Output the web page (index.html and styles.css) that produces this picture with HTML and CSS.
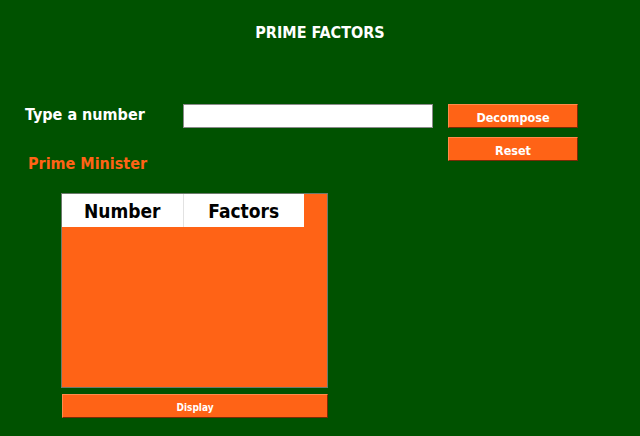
FILE: index.html
```html
<!DOCTYPE html>
<html>
<head>
<meta charset="utf-8">
<link rel="stylesheet" href="styles.css">
</head>
<body>
<h1 class="title">PRIME FACTORS</h1>
<div class="top">
  <div class="left">
    <div class="entry">
      <label class="label">Type a number</label>
      <input class="field" type="text">
    </div>
    <div class="pm">Prime Minister</div>
  </div>
  <div class="actions">
    <button class="btn">Decompose</button>
    <button class="btn">Reset</button>
  </div>
</div>
<div class="panel">
  <div class="thead">
    <div class="th">Number</div>
    <div class="th">Factors</div>
  </div>
</div>
<button class="btn display">Display</button>
</body>
</html>
```
FILE: styles.css
```css
html, body {
  margin: 0;
  padding: 0;
  background: #005200;
  width: 640px;
  height: 436px;
  overflow: hidden;
  font-family: "DejaVu Sans Condensed", "DejaVu Sans", sans-serif;
  font-weight: bold;
}
.title {
  margin: 0;
  padding-top: 23px;
  height: 20px;
  line-height: 20px;
  font-size: 16px;
  text-align: center;
  color: #fff;
}
.top {
  display: flex;
  margin-top: 61px;
  padding-left: 25px;
}
.left {
  display: flex;
  flex-direction: column;
}
.entry {
  display: flex;
  align-items: center;
  height: 24px;
}
.label {
  width: 158px;
  color: #fff;
  font-size: 16px;
  line-height: 20px;
  margin-top: -3px;
}
.field {
  box-sizing: border-box;
  width: 250px;
  height: 24px;
  margin: 0;
  border: 1px solid #8a8a8a;
  background: #fff;
}
.pm {
  margin-top: 26px;
  padding-left: 3px;
  color: #ff6316;
  font-size: 16px;
  line-height: 20px;
}
.actions {
  display: flex;
  flex-direction: column;
  gap: 9px;
  margin-left: 15px;
}
.btn {
  box-sizing: border-box;
  width: 130px;
  height: 24px;
  margin: 0;
  padding: 2px 0 0;
  background: #ff6316;
  color: #fff;
  font-family: "DejaVu Sans Condensed", "DejaVu Sans", sans-serif;
  font-weight: bold;
  font-size: 12.5px;
  border-style: solid;
  border-width: 1px;
  border-color: #ff8a4a #7a2a06 #7a2a06 #ff8a4a;
}
.panel {
  box-sizing: border-box;
  margin: 19px 0 0 61px;
  width: 267px;
  height: 195px;
  background: #ff6316;
  border: 1px solid #6c7a6c;
}
.thead {
  display: flex;
  width: 242px;
  height: 33px;
  background: #fff;
}
.th {
  width: 121px;
  text-align: center;
  line-height: 35px;
  font-size: 19px;
  color: #000;
}
.th + .th {
  border-left: 1px solid #e2e2e2;
}
.display {
  display: block;
  margin: 6px 0 0 62px;
  width: 266px;
  font-size: 10px;
}
```
